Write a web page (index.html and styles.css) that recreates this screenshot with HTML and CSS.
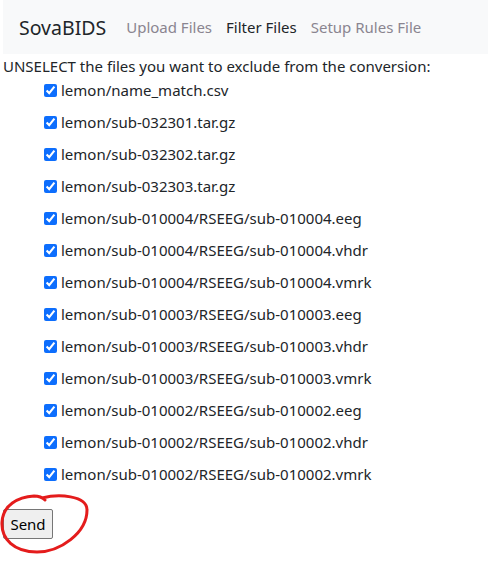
FILE: index.html
```html
<!DOCTYPE html>
<html>
<head>
<meta charset="utf-8">
<link rel="stylesheet" href="styles.css">
</head>
<body>
<div class="page">
  <nav class="navbar">
    <span class="brand">SovaBIDS</span>
    <a class="nav-link">Upload Files</a>
    <a class="nav-link active">Filter Files</a>
    <a class="nav-link">Setup Rules File</a>
  </nav>
  <form class="form">
    <p class="intro">UNSELECT the files you want to exclude from the conversion:</p>
    <ul class="files">
      <li><label><input type="checkbox" checked>lemon/name_match.csv</label></li>
      <li><label><input type="checkbox" checked>lemon/sub-032301.tar.gz</label></li>
      <li><label><input type="checkbox" checked>lemon/sub-032302.tar.gz</label></li>
      <li><label><input type="checkbox" checked>lemon/sub-032303.tar.gz</label></li>
      <li><label><input type="checkbox" checked>lemon/sub-010004/RSEEG/sub-010004.eeg</label></li>
      <li><label><input type="checkbox" checked>lemon/sub-010004/RSEEG/sub-010004.vhdr</label></li>
      <li><label><input type="checkbox" checked>lemon/sub-010004/RSEEG/sub-010004.vmrk</label></li>
      <li><label><input type="checkbox" checked>lemon/sub-010003/RSEEG/sub-010003.eeg</label></li>
      <li><label><input type="checkbox" checked>lemon/sub-010003/RSEEG/sub-010003.vhdr</label></li>
      <li><label><input type="checkbox" checked>lemon/sub-010003/RSEEG/sub-010003.vmrk</label></li>
      <li><label><input type="checkbox" checked>lemon/sub-010002/RSEEG/sub-010002.eeg</label></li>
      <li><label><input type="checkbox" checked>lemon/sub-010002/RSEEG/sub-010002.vhdr</label></li>
      <li><label><input type="checkbox" checked>lemon/sub-010002/RSEEG/sub-010002.vmrk</label></li>
    </ul>
    <div class="actions">
      <button type="button" class="send">Send</button>
      <svg class="scribble" width="96" height="66" viewBox="0 0 96 66">
        <path d="M42 5 C58 1, 87 2, 87 17 C87 40, 60 59, 37 59 C14 59, 1 46, 2 29 C3 12, 18 4, 34 3 C38 3, 42 4, 45 7" fill="none" stroke="#e41c1c" stroke-width="3" stroke-linecap="round"/>
      </svg>
    </div>
  </form>
</div>
</body>
</html>
```
FILE: styles.css
```css
html, body {
  margin: 0;
  padding: 0;
  background: #ffffff;
}
.page {
  padding-left: 3px;
  font-family: "Noto Sans", "Open Sans", sans-serif;
  font-size: 15px;
  color: #212529;
}
.navbar {
  height: 54px;
  background: #f8f9fa;
  display: flex;
  align-items: center;
  padding-left: 16px;
  box-sizing: border-box;
}
.brand {
  font-size: 19.5px;
  color: #212529;
  margin-right: 13px;
}
.nav-link {
  padding: 0 7px;
  color: #8a8590;
  font-size: 15px;
}
.nav-link.active {
  color: #212529;
}
.form {
  margin: 0;
}
.intro {
  margin: 0;
  line-height: 24px;
}
.files {
  list-style: none;
  margin: 0;
  padding: 0 0 0 41px;
}
.files li {
  line-height: 24px;
  margin-bottom: 8px;
}
.files label {
  display: flex;
  align-items: center;
}
.files input {
  width: 13px;
  height: 13px;
  margin: 0 4px 0 0;
  accent-color: #0d6efd;
}
.actions {
  position: relative;
  margin-top: 23px;
  height: 60px;
}
.send {
  font-family: "Noto Sans", "Open Sans", sans-serif;
  font-size: 15px;
  height: 30px;
  width: 50px;
  padding: 0;
  margin: 0;
  background: #efefef;
  border: 1px solid #767676;
  border-radius: 2px;
  color: #000;
}
.scribble {
  position: absolute;
  left: -3px;
  top: -16px;
}
```
